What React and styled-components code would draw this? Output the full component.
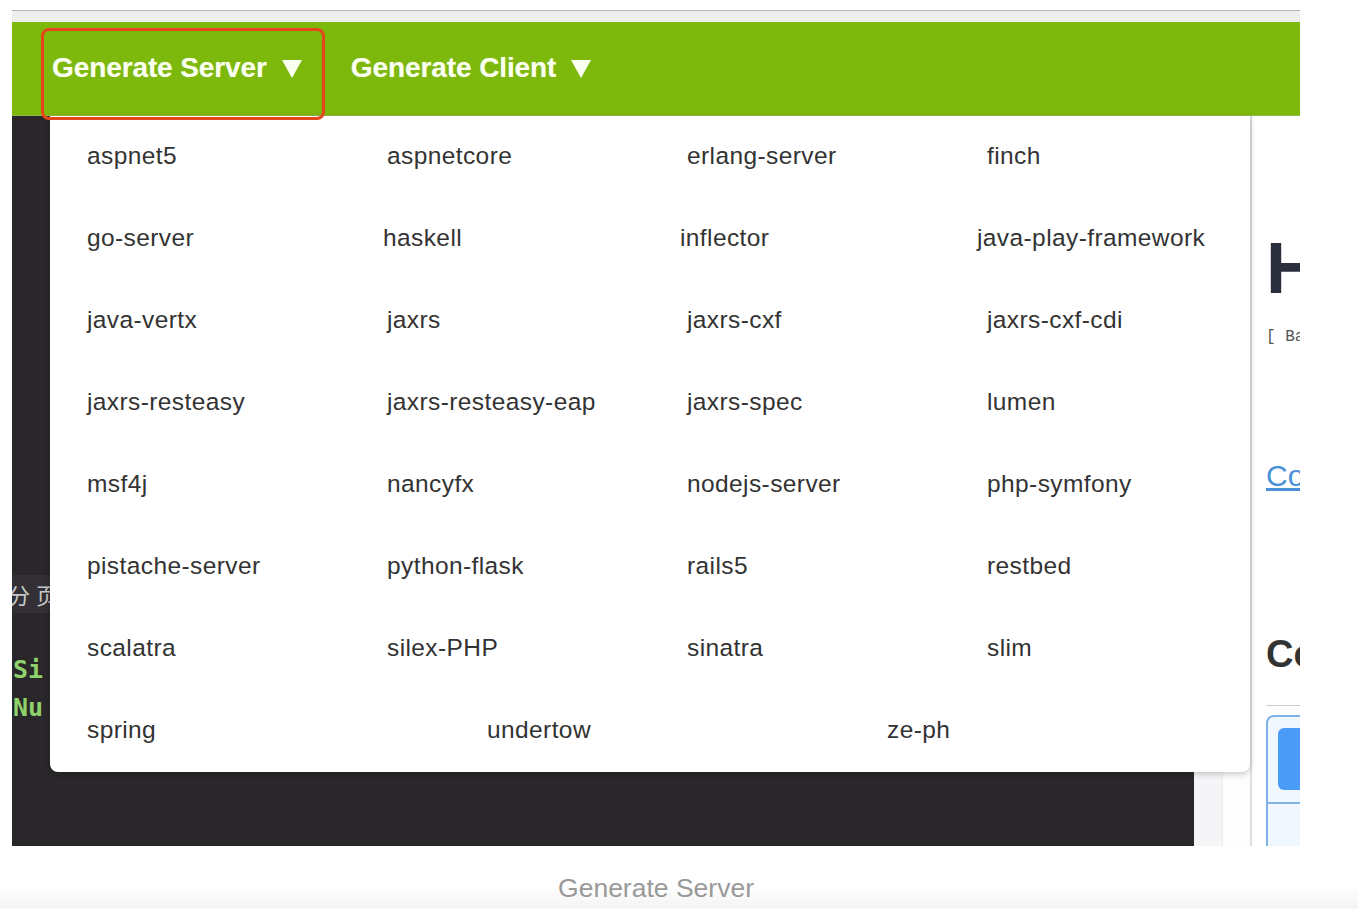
import React from 'react';
import styled, { createGlobalStyle } from 'styled-components';

const GlobalStyle = createGlobalStyle`
	html, body {
		margin: 0;
		padding: 0;
		background: #fff;
		font-family: "Liberation Sans", Arial, sans-serif;
	}
`;

const Figure = styled.div`
	width: 1358px;
	height: 916px;
	padding-top: 10px;
	box-sizing: border-box;
	overflow: hidden;
`;

const Shot = styled.div`
	position: relative;
	margin-left: 12px;
	width: 1288px;
	height: 836px;
	display: flex;
	flex-direction: column;
	overflow: hidden;
`;

const TopStrip = styled.div`
	flex-shrink: 0;
	height: 11px;
	border-top: 1px solid #b1b8be;
	background: #efeeee;
`;

const NavBar = styled.div`
	flex-shrink: 0;
	height: 94px;
	background: #7db80c;
	display: flex;
	align-items: center;
	padding-left: 40px;
	gap: 49px;
	padding-bottom: 2px;
	box-sizing: border-box;
	border-bottom: 1px solid #93b84a;
`;

const NavItem = styled.div`
	color: #fbfff0;
	font-size: 28px;
	font-weight: bold;
	letter-spacing: -0.1px;
	display: flex;
	align-items: center;
	gap: 15px;
	text-shadow: 0 0 1px rgba(255, 255, 255, 0.4);
`;

const Caret = styled.span`
	width: 0;
	height: 0;
	border-left: 10px solid transparent;
	border-right: 10px solid transparent;
	border-top: 18px solid #fbfff0;
	margin-top: 2px;
`;

const Highlight = styled.div`
	position: absolute;
	left: 29px;
	top: 18px;
	width: 284px;
	height: 92px;
	border: 3px solid #e5461b;
	border-radius: 8px;
	box-sizing: border-box;
	pointer-events: none;
`;

const Body = styled.div`
	flex: 1;
	min-height: 0;
	display: flex;
	position: relative;
`;

const Editor = styled.div`
	width: 1182px;
	flex-shrink: 0;
	background: #29272a;
	padding-top: 459px;
	overflow: hidden;
	font-family: "DejaVu Sans Mono", "Liberation Mono", monospace;
`;

const CodeLine = styled.div`
	height: 38px;
	line-height: 38px;
	margin-left: ${p => p.$cjk ? '-4px' : '-14px'};
	font-size: ${p => p.$cjk ? '22px' : '25px'};
	font-weight: ${p => p.$cjk ? 'normal' : 'bold'};
	color: ${p => p.$color};
	background: ${p => p.$band ? '#323034' : 'transparent'};
	font-family: ${p => p.$cjk ? '"Noto Sans CJK SC", sans-serif' : 'inherit'};
	letter-spacing: ${p => p.$cjk ? '6px' : '0'};
	white-space: nowrap;
`;

const Gutter = styled.div`
	width: 28px;
	flex-shrink: 0;
	background: #f5f5f7;
	border-right: 1px solid #ececee;
`;

const Spacer = styled.div`
	width: 27px;
	flex-shrink: 0;
	background: #fdfdfd;
	border-right: 2px solid #dedfe2;
`;

const Docs = styled.div`
	flex: 1;
	padding-left: 14px;
	overflow: hidden;
	background: #fff;
	font-family: "Liberation Sans", Arial, sans-serif;
`;

const BigTitle = styled.div`
	margin-top: 112px;
	font-size: 72px;
	font-weight: bold;
	color: #2b2f3d;
	line-height: 80px;
	white-space: nowrap;
`;

const Mono = styled.div`
	margin-top: 20px;
	font-family: "Liberation Mono", monospace;
	font-size: 16px;
	color: #555;
	white-space: nowrap;
`;

const DocLink = styled.div`
	margin-top: 113px;
	font-size: 30px;
	color: #4a90d9;
	text-decoration: underline;
	white-space: nowrap;
`;

const SubTitle = styled.div`
	margin-top: 140px;
	font-size: 38px;
	font-weight: bold;
	color: #333;
	white-space: nowrap;
`;

const Rule = styled.div`
	margin-top: 29px;
	height: 1px;
	background: #ccc;
`;

const Card = styled.div`
	margin-top: 9px;
	height: 200px;
	border: 2px solid #7fb3e8;
	border-right: none;
	border-radius: 8px 0 0 0;
	background: #f0f7ff;
	padding: 11px 0 0 10px;
`;

const CardButton = styled.div`
	height: 62px;
	background: #4b9cf8;
	border-radius: 6px 0 0 6px;
	margin-bottom: 12px;
`;

const CardRow = styled.div`
	border-top: 2px solid #7fb3e8;
	margin-left: -10px;
`;

const Menu = styled.div`
	position: absolute;
	left: 38px;
	top: 0;
	width: 1200px;
	background: #fff;
	border-radius: 0 0 8px 8px;
	box-shadow: 0 2px 6px rgba(0, 0, 0, 0.22);
	padding-left: 37px;
	box-sizing: border-box;
`;

const MenuRow = styled.div`
	display: grid;
	grid-template-columns: ${p => p.$cols};
	height: 82px;
	align-items: center;
`;

const MenuItem = styled.div`
	font-size: 24.5px;
	letter-spacing: 0.4px;
	color: #333;
	white-space: nowrap;
	padding-bottom: 2px;
`;

const Caption = styled.div`
	width: 1358px;
	height: 70px;
	padding: 14px 46px 0 0;
	box-sizing: border-box;
	display: flex;
	align-items: center;
	justify-content: center;
	font-size: 26.5px;
	color: #999;
	background: linear-gradient(#fff 0, #fff 40px, #f4f4f4 62px, #fff 63px);
`;

const rows = [
	['aspnet5', 'aspnetcore', 'erlang-server', 'finch'],
	['go-server', 'haskell', 'inflector', 'java-play-framework'],
	['java-vertx', 'jaxrs', 'jaxrs-cxf', 'jaxrs-cxf-cdi'],
	['jaxrs-resteasy', 'jaxrs-resteasy-eap', 'jaxrs-spec', 'lumen'],
	['msf4j', 'nancyfx', 'nodejs-server', 'php-symfony'],
	['pistache-server', 'python-flask', 'rails5', 'restbed'],
	['scalatra', 'silex-PHP', 'sinatra', 'slim'],
	['spring', 'undertow', 'ze-ph'],
];

const colsFor = (row, i) => {
	if (row.length === 3) return '400px 400px auto';
	if (i === 1) return '296px 297px 297px auto';
	return '300px 300px 300px auto';
};

const App = () => (
	<>
		<GlobalStyle />
		<Figure>
			<Shot>
				<TopStrip />
				<NavBar>
					<NavItem>Generate Server <Caret /></NavItem>
					<NavItem>Generate Client <Caret /></NavItem>
				</NavBar>
				<Body>
					<Editor>
						<CodeLine $cjk $band $color="#c8c8c8">分页</CodeLine>
						<CodeLine $color="#2a2a2a"> </CodeLine>
						<CodeLine $color="#8fd16a">:Si</CodeLine>
						<CodeLine $color="#8fd16a">.Nu</CodeLine>
					</Editor>
					<Gutter />
					<Spacer />
					<Docs>
						<BigTitle>Hello</BigTitle>
						<Mono>[ Base URL</Mono>
						<DocLink>Contact</DocLink>
						<SubTitle>Config</SubTitle>
						<Rule />
						<Card>
							<CardButton />
							<CardRow />
						</Card>
					</Docs>
					<Menu>
						{rows.map((row, i) => (
							<MenuRow key={i} $cols={colsFor(row, i)}>
								{row.map(name => <MenuItem key={name}>{name}</MenuItem>)}
							</MenuRow>
						))}
					</Menu>
				</Body>
				<Highlight />
			</Shot>
			<Caption>Generate Server</Caption>
		</Figure>
	</>
);

export default App;
